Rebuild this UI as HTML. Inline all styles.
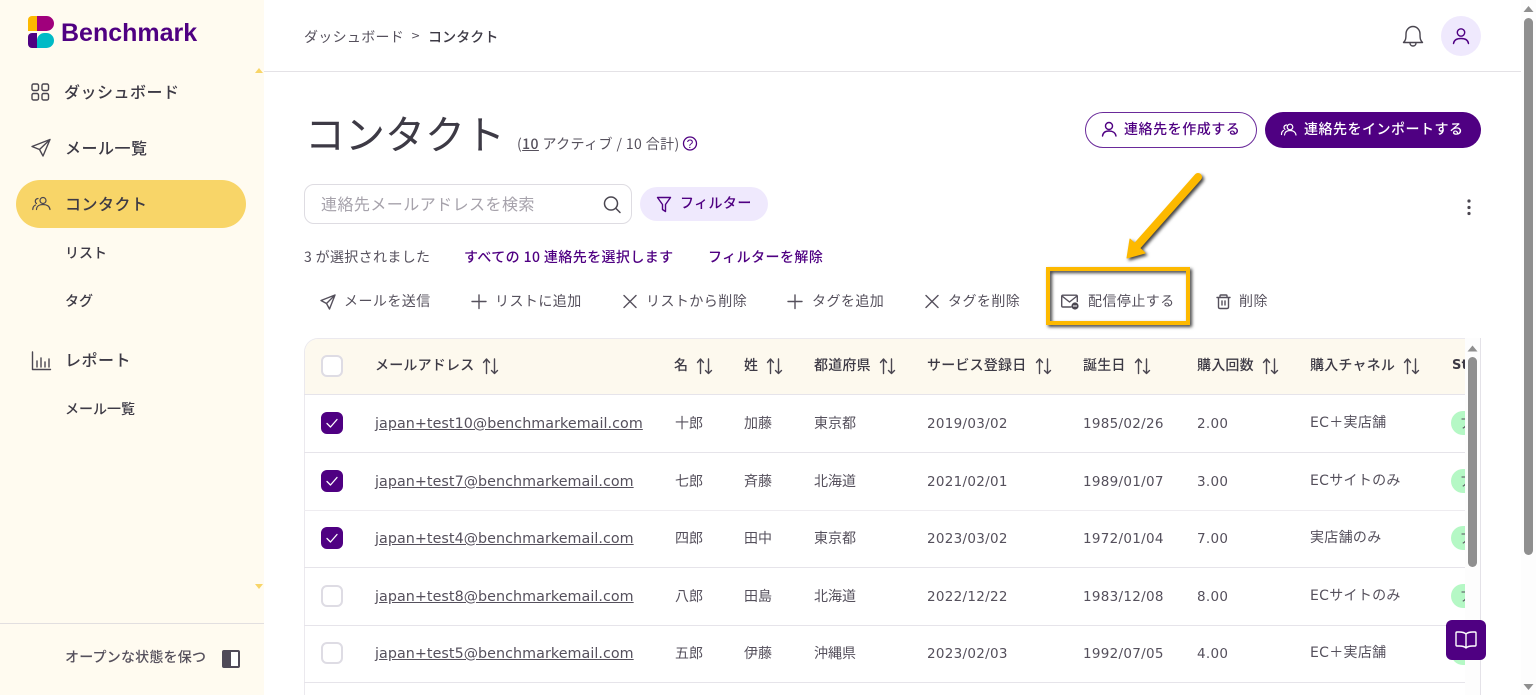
<!DOCTYPE html>
<html lang="ja"><head><meta charset="utf-8"><title>コンタクト</title>
<style>
*{box-sizing:border-box}
html,body{margin:0;padding:0;width:1536px;height:695px;overflow:hidden;background:#fff}
body{position:relative;font-family:"DejaVu Sans","Noto Sans CJK JP",sans-serif;color:#3d3a45}
.t{position:absolute;white-space:nowrap;line-height:20px;font-size:14px;font-family:"Noto Sans CJK JP",sans-serif}
.b{font-weight:500}
.nav{font-size:16px;letter-spacing:.5px;font-weight:500;color:#3d3a45}
.sub{font-size:14px;font-weight:500;color:#3d3a45}
.act{color:#55505c;letter-spacing:.45px}
.p{color:#4f0082;font-weight:500;letter-spacing:.4px}
.th{font-weight:500;color:#3d3a45;letter-spacing:.2px}
.td{color:#55505c;letter-spacing:0}
.n{font-family:"DejaVu Sans","Noto Sans CJK JP",sans-serif;font-size:13.5px;letter-spacing:.3px;margin-top:1px}
.ec{font-family:"DejaVu Sans","Noto Sans CJK JP",sans-serif;font-size:14px;letter-spacing:.3px}
.em{font-family:"DejaVu Sans",sans-serif;font-size:14.3px;text-decoration:underline;color:#55505c;letter-spacing:.05px;margin-top:1px}
svg{position:absolute;overflow:visible}
.i{fill:none;stroke:#55505c;stroke-width:1.4;stroke-linecap:round;stroke-linejoin:round}
.abs{position:absolute}
.cb{position:absolute;left:321px;width:22px;height:22px;border-radius:6px;border:2px solid #dedce4;background:#fff}
.ck{background:#4f0082;border-color:#4f0082}
.ck svg{left:3px;top:3px}
.pill{position:absolute;left:1451px;width:30px;height:24px;border-radius:12px;background:#b5f8c5;color:#55505c;font-size:13px;line-height:24px;padding-left:9px;font-family:"Noto Sans CJK JP",sans-serif}
.rb{position:absolute;left:304px;width:1161px;height:1px;background:#e6e4ea}
</style></head><body>

<!-- Sidebar -->
<div class="abs" style="left:0;top:0;width:264px;height:695px;background:#fffbf0"></div>
<div class="abs" style="left:28px;top:16px;width:8.5px;height:15px;background:#fdb900;border-radius:4px 0 0 0"></div>
<div class="abs" style="left:37px;top:16px;width:17px;height:15px;background:#a0007c;border-radius:0 8px 8px 0"></div>
<div class="abs" style="left:28px;top:33px;width:8.5px;height:15px;background:#4f0082;border-radius:4px 0 0 4px"></div>
<div class="abs" style="left:37px;top:33px;width:17px;height:15px;background:#00bac6;border-radius:8px 8px 8px 0"></div>
<span class="t" style="left:61px;top:18px;line-height:30px;font-family:'Liberation Sans',sans-serif;font-weight:700;font-size:25px;letter-spacing:0;color:#4f0082">Benchmark</span>

<svg style="left:0;top:0" width="264" height="695">
<path d="M255 73l4-5 4 5z" fill="#f8d568"/><path d="M255 584h8l-4 5z" fill="#f8d568"/>
<g class="i" style="stroke:#4a4650">
<rect x="32" y="84" width="6.5" height="6.5" rx="1.5"/><rect x="42" y="84" width="6.5" height="6.5" rx="1.5"/><rect x="32" y="93.5" width="6.5" height="6.5" rx="1.5"/><rect x="42" y="93.5" width="6.5" height="6.5" rx="1.5"/>
<path d="M32 146.5L50 139.5 43 156 39.5 149.5zM39.5 149.5L50 139.5"/>
<path d="M32.500 352v17.500h18M37 367v-6M41 367v-9M45 367v-5M49 367v-8"/>
</g></svg>
<div class="abs" style="left:16px;top:180px;width:230px;height:48px;border-radius:24px;background:#f8d568"></div>
<svg style="left:0;top:0" width="264" height="240"><g class="i" style="stroke:#4a4650;stroke-width:1.2"><circle cx="43" cy="200.500" r="3"/><path d="M36.500 209.500c0-3.500 3-5 6.500-5s6.500 1.500 7 5M38 198.500c-1.800.3-2.700 1.500-2.700 2.800 0 .9.400 1.700 1.200 2.200M35.500 205c-1.800.8-2.700 2.400-2.700 4.500"/></g></svg>

<span class="t nav" style="left:64px;top:81px">ダッシュボード</span>
<span class="t nav" style="left:65px;top:137px">メール一覧</span>
<span class="t nav" style="left:65px;top:193px">コンタクト</span>
<span class="t sub" style="left:65px;top:243px">リスト</span>
<span class="t sub" style="left:65px;top:291px">タグ</span>
<span class="t nav" style="left:65px;top:349px">レポート</span>
<span class="t sub" style="left:65px;top:399px">メール一覧</span>
<div class="abs" style="left:0;top:623px;width:264px;height:1px;background:#e2dfe0"></div>
<span class="t" style="left:65px;top:647px;color:#55505c;font-weight:500;letter-spacing:.2px">オープンな状態を保つ</span>
<div class="abs" style="left:222px;top:650px;width:18px;height:18px;border:2px solid #4f4a58;border-radius:2px;background:linear-gradient(90deg,#4f4a58 50%,#fff 50%)"></div>

<!-- Top bar -->
<div class="abs" style="left:264px;top:71px;width:1257px;height:1px;background:#e4e2e6"></div>
<span class="t" style="left:304px;top:27px;color:#55505c;letter-spacing:.3px">ダッシュボード</span>
<span class="t" style="left:411px;top:26px;color:#55505c;font-family:'DejaVu Sans',sans-serif;font-size:11px">&gt;</span>
<span class="t b" style="left:428px;top:27px;letter-spacing:.1px">コンタクト</span>
<svg style="left:0;top:0" width="1536" height="200">
<g class="i" style="stroke:#4a4650"><path d="M1403.500 42.500c2-2 2.500-3.500 2.500-8.500 0-4 3-7.500 7-7.500s7 3.500 7 7.500c0 5 .5 6.500 2.500 8.500zM1410 43c0 4 6 4 6 0"/></g>
<circle cx="1461" cy="36" r="20" fill="#efe9fd"/>
<g class="i" style="stroke:#4f0082"><circle cx="1461" cy="32.500" r="3.700"/><path d="M1453.500 43.500c.5-3.500 3.500-5 7.500-5s7 1.500 7.500 5"/></g>
</svg>

<!-- Heading -->
<span class="t" style="left:305px;top:107px;line-height:50px;font-size:40px;color:#3d3a45">コンタクト</span>
<span class="t" style="left:517px;top:134px;color:#55505c;letter-spacing:.4px">(<u style="font-weight:500">10</u> アクティブ / 10 合計)</span>
<svg style="left:0;top:0" width="800" height="200"><circle cx="690" cy="143.500" r="6.500" fill="none" stroke="#4f0082" stroke-width="1.300"/><text x="690" y="148" font-size="12" text-anchor="middle" fill="#4f0082" font-family="Liberation Sans">?</text></svg>

<div class="abs" style="left:1085px;top:112px;width:172px;height:36px;border:1px solid #6a2a9a;border-radius:18px;background:#fff"></div>
<span class="t p" style="left:1124px;top:119px;letter-spacing:.55px">連絡先を作成する</span>
<div class="abs" style="left:1265px;top:112px;width:216px;height:36px;border-radius:18px;background:#4f0082"></div>
<span class="t" style="left:1304px;top:119px;color:#fff;font-weight:500;letter-spacing:.5px">連絡先をインポートする</span>
<svg style="left:0;top:0" width="1536" height="200">
<g class="i" style="stroke:#4f0082"><circle cx="1109" cy="126" r="3.500"/><path d="M1102.500 136c.5-3.500 3-5 6.500-5s6.500 1.500 7 5"/></g>
<g class="i" style="stroke:#fff;stroke-width:1.200"><circle cx="1290" cy="127" r="2.800"/><path d="M1284.500 135c.3-3 2.500-4.500 5.500-4.500s5.500 1.500 6 4.500M1286.500 125c-1.800.3-2.500 1.500-2.500 2.500 0 .8.300 1.400 1 1.800M1283.500 130.500c-1.300.7-2 2-2 4"/></g>
</svg>

<!-- Search row -->
<div class="abs" style="left:304px;top:184px;width:328px;height:40px;border:1px solid #dedce2;border-radius:10px;background:#fff"></div>
<span class="t" style="left:321px;top:193px;font-size:16px;letter-spacing:.45px;color:#a6a2ab">連絡先メールアドレスを検索</span>
<div class="abs" style="left:640px;top:187px;width:128px;height:34px;border-radius:17px;background:#efe9fd"></div>
<span class="t p" style="left:680px;top:193px">フィルター</span>
<svg style="left:0;top:0" width="1536" height="320">
<g class="i" style="stroke:#4a4650;stroke-width:1.500"><circle cx="611" cy="203.500" r="6.500"/><path d="M616 208.500l4 4"/></g>
<g class="i" style="stroke:#4f0082"><path d="M657.500 197.500h13l-5 7v7l-3-2v-5z"/></g>
<circle cx="1469" cy="201" r="1.600" fill="#4a4650"/><circle cx="1469" cy="207.500" r="1.600" fill="#4a4650"/><circle cx="1469" cy="213.500" r="1.600" fill="#4a4650"/>
</svg>

<span class="t" style="left:304px;top:247px;color:#55505c;letter-spacing:.35px">3 が選択されました</span>
<span class="t p" style="left:464px;top:247px;letter-spacing:.4px">すべての 10 連絡先を選択します</span>
<span class="t p" style="left:708px;top:247px;letter-spacing:.45px">フィルターを解除</span>

<!-- Actions -->
<span class="t act" style="left:344px;top:291px">メールを送信</span>
<span class="t act" style="left:495px;top:291px">リストに追加</span>
<span class="t act" style="left:646px;top:291px">リストから削除</span>
<span class="t act" style="left:812px;top:291px">タグを追加</span>
<span class="t act" style="left:948px;top:291px">タグを削除</span>
<span class="t act" style="left:1088px;top:291px">配信停止する</span>
<span class="t act" style="left:1239px;top:291px">削除</span>
<svg style="left:0;top:0" width="1536" height="340">
<g class="i">
<path d="M321 300.500L335 295 329.500 309 326.500 303.500zM326.500 303.500L335 295"/>
<path d="M479 295v13.500M472 301.500h14M624 295.500l12 12M636 295.500l-12 12"/>
<path d="M795 295v13.500M788 301.500h14M926 295.500l12 12M938 295.500l-12 12"/>
<path d="M1071 307h-8c-.8 0-1.300-.5-1.300-1.300v-9.200c0-.8.5-1.300 1.300-1.300h13c.8 0 1.300.5 1.300 1.300v5M1062 296l7.500 6 7.500-6"/>
<path d="M1217 297.500h13M1220 297.500v-1.500c0-.5.3-1 1-1h5c.7 0 1 .5 1 1v1.500M1218.500 297.500v9.500c0 1 .7 1.500 1.500 1.500h7c.8 0 1.500-.5 1.500-1.500v-9.500M1222 301v4M1225 301v4"/>
</g>
<circle cx="1075" cy="306" r="3.600" fill="#4a4650"/><path d="M1073 306h4" stroke="#fff" stroke-width="1"/>
<!-- highlight + arrow with soft shadow -->
<g style="filter:drop-shadow(2px 2px 1.5px rgba(0,0,0,.75))">
<rect x="1048" y="269" width="140" height="54" fill="none" stroke="#fdb900" stroke-width="4"/>
<path d="M1198 177L1137 246" stroke="#fdb900" stroke-width="8" stroke-linecap="round" fill="none"/>
<path d="M1130 239L1127 258 1145 253z" fill="#fdb900" stroke="#fdb900" stroke-linejoin="round"/>
</g>
</svg>

<!-- Table -->
<div class="abs" style="left:304px;top:338px;width:1177px;height:357px;border:1px solid #ebe9ee;border-bottom:0;border-radius:14px 14px 0 0;overflow:hidden;background:#fff">
<div style="height:56px;background:#fdf9ee"></div></div>
<div class="rb" style="top:394px"></div>
<div class="rb" style="top:452px"></div>
<div class="rb" style="top:510px;background:#eeecf0"></div>
<div class="rb" style="top:567px"></div>
<div class="rb" style="top:625px"></div>
<div class="rb" style="top:682px"></div>

<div class="cb" style="top:355px"></div>
<span class="t th" style="left:375px;top:355px">メールアドレス</span>
<span class="t th" style="left:674px;top:355px">名</span>
<span class="t th" style="left:744px;top:355px">姓</span>
<span class="t th" style="left:814px;top:355px">都道府県</span>
<span class="t th" style="left:927px;top:355px">サービス登録日</span>
<span class="t th" style="left:1083px;top:355px">誕生日</span>
<span class="t th" style="left:1197px;top:355px">購入回数</span>
<span class="t th" style="left:1310px;top:355px">購入チャネル</span>
<span class="t th" style="left:1452px;top:356px;font-family:'DejaVu Sans',sans-serif;font-size:13px;font-weight:700">St</span>

<svg style="left:0;top:0" width="1536" height="380">
<g class="i" style="stroke:#4a4650">
<path d="M486.500 373.500v-14M483.500 362.500l3-3.500 3 3.500M494.500 359v14.500M491.500 370.500l3 3 3-3"/>
<path d="M700.500 373.500v-14M697.500 362.500l3-3.500 3 3.500M708.500 359v14.500M705.500 370.500l3 3 3-3"/>
<path d="M770.500 373.500v-14M767.500 362.500l3-3.500 3 3.500M778.500 359v14.500M775.500 370.500l3 3 3-3"/>
<path d="M883.500 373.500v-14M880.500 362.500l3-3.500 3 3.500M891.500 359v14.500M888.500 370.500l3 3 3-3"/>
<path d="M1039.500 373.500v-14M1036.500 362.500l3-3.500 3 3.500M1047.500 359v14.500M1044.500 370.500l3 3 3-3"/>
<path d="M1138.500 373.500v-14M1135.500 362.500l3-3.500 3 3.500M1146.500 359v14.500M1143.500 370.500l3 3 3-3"/>
<path d="M1266.500 373.500v-14M1263.500 362.500l3-3.500 3 3.500M1274.500 359v14.500M1271.500 370.500l3 3 3-3"/>
<path d="M1407.500 373.500v-14M1404.500 362.500l3-3.500 3 3.500M1415.500 359v14.500M1412.500 370.500l3 3 3-3"/>
</g></svg>

<!-- Row 1 -->
<div class="cb ck" style="top:412px"><svg width="12" height="12"><path d="M1 6.500l3.500 3.500L11 2.500" fill="none" stroke="#fff" stroke-width="1.300" stroke-linecap="round" stroke-linejoin="round"/></svg></div>
<span class="t em" style="left:375px;top:413px">japan+test10@benchmarkemail.com</span>
<span class="t td" style="left:675px;top:413px">十郎</span><span class="t td" style="left:744px;top:413px">加藤</span><span class="t td" style="left:814px;top:413px">東京都</span>
<span class="t td n" style="left:927px;top:413px">2019/03/02</span><span class="t td n" style="left:1083px;top:413px">1985/02/26</span><span class="t td n" style="left:1197px;top:413px">2.00</span><span class="t td ec" style="left:1310px;top:413px">EC＋実店舗</span>
<div class="pill" style="top:411px">ア</div>
<!-- Row 2 -->
<div class="cb ck" style="top:470px"><svg width="12" height="12"><path d="M1 6.500l3.500 3.500L11 2.500" fill="none" stroke="#fff" stroke-width="1.300" stroke-linecap="round" stroke-linejoin="round"/></svg></div>
<span class="t em" style="left:375px;top:471px">japan+test7@benchmarkemail.com</span>
<span class="t td" style="left:675px;top:471px">七郎</span><span class="t td" style="left:744px;top:471px">斉藤</span><span class="t td" style="left:814px;top:471px">北海道</span>
<span class="t td n" style="left:927px;top:471px">2021/02/01</span><span class="t td n" style="left:1083px;top:471px">1989/01/07</span><span class="t td n" style="left:1197px;top:471px">3.00</span><span class="t td ec" style="left:1310px;top:471px">ECサイトのみ</span>
<div class="pill" style="top:469px">ア</div>
<!-- Row 3 -->
<div class="cb ck" style="top:527px"><svg width="12" height="12"><path d="M1 6.500l3.500 3.500L11 2.500" fill="none" stroke="#fff" stroke-width="1.300" stroke-linecap="round" stroke-linejoin="round"/></svg></div>
<span class="t em" style="left:375px;top:528px">japan+test4@benchmarkemail.com</span>
<span class="t td" style="left:675px;top:528px">四郎</span><span class="t td" style="left:744px;top:528px">田中</span><span class="t td" style="left:814px;top:528px">東京都</span>
<span class="t td n" style="left:927px;top:528px">2023/03/02</span><span class="t td n" style="left:1083px;top:528px">1972/01/04</span><span class="t td n" style="left:1197px;top:528px">7.00</span><span class="t td ec" style="left:1310px;top:528px">実店舗のみ</span>
<div class="pill" style="top:526px">ア</div>
<!-- Row 4 -->
<div class="cb" style="top:585px"></div>
<span class="t em" style="left:375px;top:586px">japan+test8@benchmarkemail.com</span>
<span class="t td" style="left:675px;top:586px">八郎</span><span class="t td" style="left:744px;top:586px">田島</span><span class="t td" style="left:814px;top:586px">北海道</span>
<span class="t td n" style="left:927px;top:586px">2022/12/22</span><span class="t td n" style="left:1083px;top:586px">1983/12/08</span><span class="t td n" style="left:1197px;top:586px">8.00</span><span class="t td ec" style="left:1310px;top:586px">ECサイトのみ</span>
<div class="pill" style="top:584px">ア</div>
<!-- Row 5 -->
<div class="cb" style="top:642px"></div>
<span class="t em" style="left:375px;top:643px">japan+test5@benchmarkemail.com</span>
<span class="t td" style="left:675px;top:643px">五郎</span><span class="t td" style="left:744px;top:643px">伊藤</span><span class="t td" style="left:814px;top:643px">沖縄県</span>
<span class="t td n" style="left:927px;top:643px">2023/02/03</span><span class="t td n" style="left:1083px;top:643px">1992/07/05</span><span class="t td n" style="left:1197px;top:643px">4.00</span><span class="t td ec" style="left:1310px;top:643px">EC＋実店舗</span>
<div class="pill" style="top:641px">ア</div>

<!-- Inner scrollbar -->
<div class="abs" style="left:1465px;top:338px;width:16px;height:357px;background:#fdfdfd;border-right:1px solid #e4e2e8"></div>
<div class="abs" style="left:1468px;top:357px;width:9px;height:210px;border-radius:5px;background:#8f8f8f"></div>
<svg style="left:0;top:0" width="1536" height="695"><path d="M1467.500 351.500l5-6 5 6z" fill="#8f8f8f"/></svg>

<!-- Page scrollbar -->
<div class="abs" style="left:1521px;top:0;width:15px;height:695px;background:#fdfdfd"></div>
<div class="abs" style="left:1524px;top:18px;width:9px;height:537px;border-radius:5px;background:#8f8f8f"></div>
<svg style="left:0;top:0" width="1536" height="695"><path d="M1523.500 12l5-6 5 6z" fill="#8f8f8f"/><path d="M1523.500 684l5 6 5-6z" fill="#8f8f8f"/></svg>

<!-- Help -->
<div class="abs" style="left:1446px;top:620px;width:40px;height:40px;border-radius:6px;background:#4f0082"></div>
<svg style="left:0;top:0" width="1536" height="695"><g class="i" style="stroke:#fff;stroke-width:1.400"><path d="M1466 634c-1.500-1.500-3.500-2-7-2h-2c-.6 0-1 .4-1 1v12c0 .6.4 1 1 1h2.500c3 0 5 .5 6.500 2 1.500-1.500 3.500-2 6.500-2h2.500c.6 0 1-.4 1-1v-12c0-.6-.4-1-1-1h-2c-3.500 0-5.500.5-7 2zM1466 634v14"/></g></svg>
</body></html>
